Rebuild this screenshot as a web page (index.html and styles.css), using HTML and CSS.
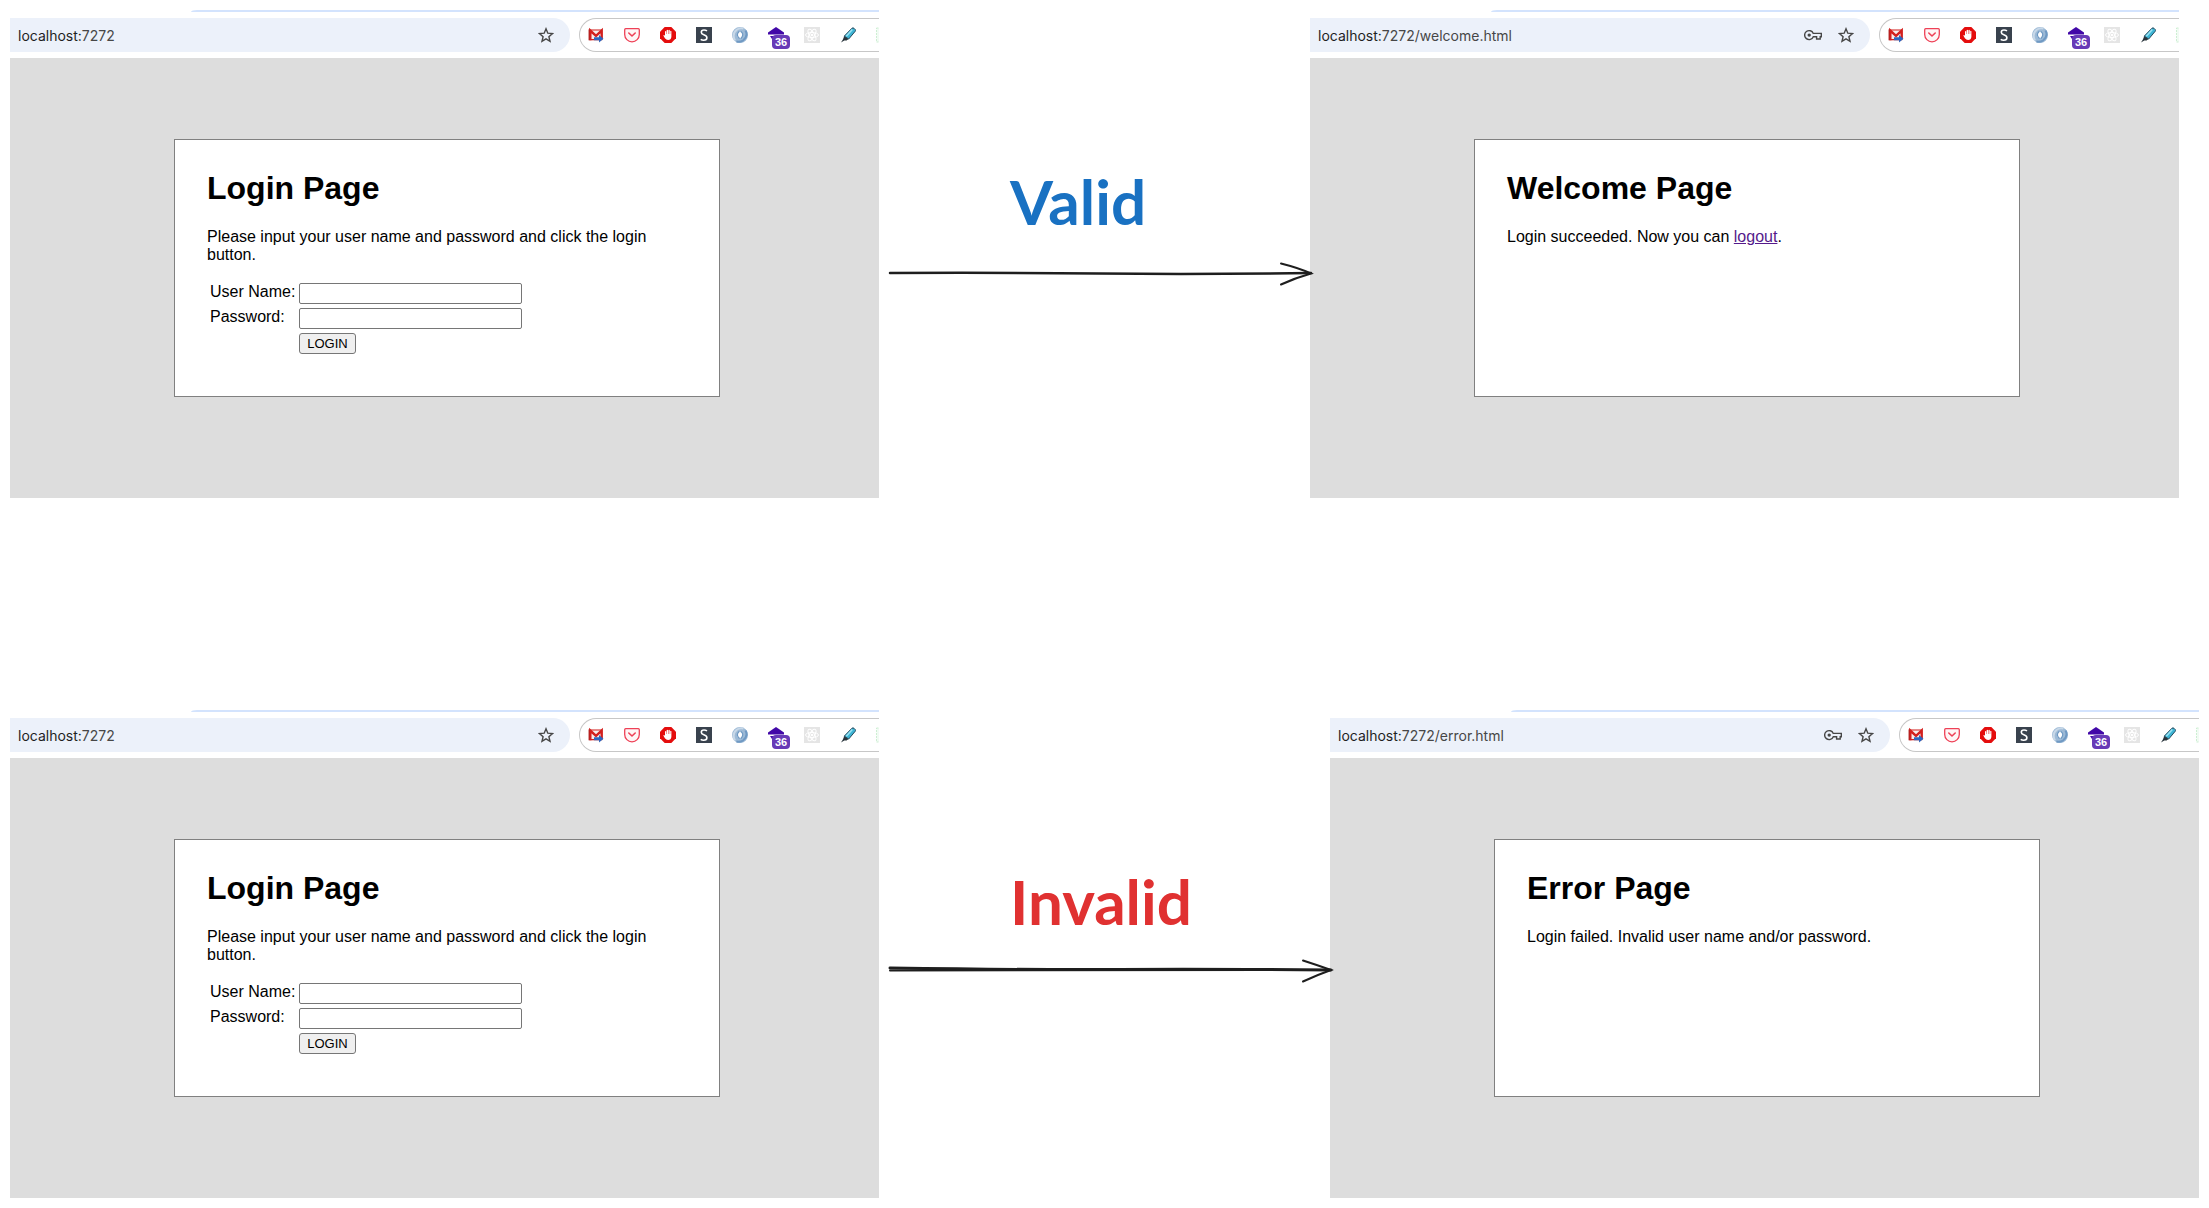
FILE: index.html
```html
<!DOCTYPE html>
<html lang="en">
<head>
<meta charset="utf-8">
<title>Login flow</title>
<link rel="stylesheet" href="styles.css">
</head>
<body>
<svg class="sprite" aria-hidden="true">
  <symbol id="star" viewBox="0 0 16 16"><path d="M8 1.800l1.800 4.400 4.700.4-3.600 3.100 1.100 4.600L8 11.800l-4 2.500 1.100-4.600L1.500 6.600l4.700-.4z" fill="none" stroke="#474747" stroke-width="1.400"/></symbol>
  <symbol id="key" viewBox="0 0 18 16"><path d="M9.300 6.400a4.500 4.500 0 1 0 0 3.400h3.300v2.200h3.600V9.800h1.100V6.400z" fill="none" stroke="#474747" stroke-width="1.400"/><circle cx="5.200" cy="8.100" r="1.700" fill="#474747"/></symbol>
  <symbol id="mail" viewBox="0 0 16 16"><path d="M1 2.500h14v11H1z" fill="#f6eded"/><path d="M2 3h12M2 12.700h12" stroke="#d3201f" stroke-width="1.200"/><path d="M2.300 13.300V3.500L8 8.800l5.700-5.300v9" fill="none" stroke="#d3201f" stroke-width="2.400"/><path d="M1.100 2.400v10.900" stroke="#a81212"/><path d="M6 10.300h5V8l4.500 3.800L11 15.500v-2.200H6z" fill="#2f66bd"/></symbol>
  <symbol id="pocket" viewBox="0 0 16 16"><path d="M1.700 1.700h12.600q1 0 1 1v4.800a7.300 7.300 0 0 1-14.600 0V2.700q0-1 1-1z" fill="#fff5f6" stroke="#ee4056" stroke-width="1.300"/><path d="M4.800 6L8 9l3.200-3" fill="none" stroke="#ee4056" stroke-width="1.600" stroke-linecap="round" stroke-linejoin="round"/></symbol>
  <symbol id="hand" viewBox="0 0 16 16"><path d="M4.700 0h6.600L16 4.700v6.600L11.300 16H4.700L0 11.300V4.700z" fill="#e40d0d"/><path d="M5 8V4.400q.6-.8 1.200 0V7h.4V3.200q.7-.8 1.400 0V7h.4V3.200q.7-.8 1.400 0V7h.4V4.200q.6-.7 1.200 0v5.500q-.3 3.300-3.300 3.300-2 0-3.200-1.800L3.300 8.500q.7-1.200 1.700.2z" fill="#fff"/></symbol>
  <symbol id="letter" viewBox="0 0 16 16"><path d="M0 0h16v16H0z" fill="#39424e"/><path d="M11 3.900Q9.700 3 8 3 5.300 3 5.300 5.200q0 1.600 2.500 2.500 3.100 1.100 3.100 3 0 2.500-3.200 2.500-1.800 0-3-.9" fill="none" stroke="#fff" stroke-width="1.600"/></symbol>
  <symbol id="ring" viewBox="0 0 16 16"><circle cx="8" cy="8" r="5.500" fill="#fff" stroke="#9dbad6" stroke-width="5"/><path d="M3 13.500Q-.5 7 5 2.500 8 .5 11.500 1.500" fill="none" stroke="#c8d8e8" stroke-width="2"/><path d="M13.500 3.500Q16.500 9 11 13.500 8 15.500 4.500 14.500" fill="none" stroke="#6f99c3" stroke-width="2"/><path d="M7 4.500Q3.500 8 7.500 11.500M9 4.500q3.500 3 0 7" fill="none" stroke="#6f99c3" stroke-width="1.200"/></symbol>
  <symbol id="house" viewBox="0 0 16 16"><path d="M8 0l8 5.500v2H0v-2z" fill="#4208a8"/><path d="M2 9h12v3H4z" fill="#4208a8"/></symbol>
  <symbol id="atom" viewBox="0 0 16 16"><path d="M0 0h16v16H0z" fill="#e5e5e5"/><g fill="none" stroke="#fff"><ellipse cx="8" cy="8" rx="6.500" ry="2.500"/><ellipse cx="8" cy="8" rx="6.500" ry="2.500" transform="rotate(60 8 8)"/><ellipse cx="8" cy="8" rx="6.500" ry="2.500" transform="rotate(120 8 8)"/></g><circle cx="8" cy="8" r="1.300" fill="#fff"/></symbol>
  <symbol id="marker" viewBox="0 0 16 16"><path d="M12 1.200q1-.7 2 .1l1.200 1.200q.6.900 0 1.800L8.700 12 4.200 9.200z" fill="#3db4d4" stroke="#24485c"/><path d="M12.300 2.500l-6 6.800" stroke="#9be4f4" stroke-width="1.500"/><path d="M4.200 9.200L8.600 12l-2 1.600-2.300-.2L1 15.500l1.900-3z" fill="#28343b"/></symbol>
  <symbol id="sheet" viewBox="0 0 16 16"><path d="M.5 1h15v14H.5z" fill="#f1fbf3" stroke="#cdeed3" stroke-dasharray="2 1"/></symbol>
</svg>

<main class="board">
  <section class="flow flow-valid">
    <article class="browser">
      <div class="tabline"></div>
      <header class="toolbar">
        <div class="address"><span class="url"><b>localhost:</b>7272</span><svg class="icon"><use href="#star"/></svg></div>
        <div class="extensions">
          <svg class="icon"><use href="#mail"/></svg><svg class="icon"><use href="#pocket"/></svg><svg class="icon"><use href="#hand"/></svg><svg class="icon"><use href="#letter"/></svg><svg class="icon"><use href="#ring"/></svg><span class="counter"><svg class="icon"><use href="#house"/></svg><span class="badge">36</span></span><svg class="icon"><use href="#atom"/></svg><svg class="icon"><use href="#marker"/></svg><svg class="icon"><use href="#sheet"/></svg>
        </div>
      </header>
      <div class="viewport">
        <div class="card">
          <h1>Login Page</h1>
          <p>Please input your user name and password and click the login button.</p>
          <form>
            <label for="user-1">User Name:</label><input id="user-1" type="text">
            <label for="pass-1">Password:</label><input id="pass-1" type="password">
            <button type="button">LOGIN</button>
          </form>
        </div>
      </div>
    </article>
    <div class="connector valid">
      <span class="caption">Valid</span>
      <svg class="arrow" viewBox="0 0 431 24"><path d="M11 12Q120 11.500 220 12.500T432 12" stroke-width="2.500"/><path d="M402 2.500Q420 7 432 12.500 416 17 402 23.500" stroke-width="2"/></svg>
    </div>
    <article class="browser">
      <div class="tabline"></div>
      <header class="toolbar">
        <div class="address"><span class="url"><b>localhost:</b>7272/welcome.html</span><svg class="icon key"><use href="#key"/></svg><svg class="icon"><use href="#star"/></svg></div>
        <div class="extensions">
          <svg class="icon"><use href="#mail"/></svg><svg class="icon"><use href="#pocket"/></svg><svg class="icon"><use href="#hand"/></svg><svg class="icon"><use href="#letter"/></svg><svg class="icon"><use href="#ring"/></svg><span class="counter"><svg class="icon"><use href="#house"/></svg><span class="badge">36</span></span><svg class="icon"><use href="#atom"/></svg><svg class="icon"><use href="#marker"/></svg><svg class="icon"><use href="#sheet"/></svg>
        </div>
      </header>
      <div class="viewport">
        <div class="card">
          <h1>Welcome Page</h1>
          <p>Login succeeded. Now you can <a href="#logout">logout</a>.</p>
        </div>
      </div>
    </article>
  </section>

  <section class="flow flow-invalid">
    <article class="browser">
      <div class="tabline"></div>
      <header class="toolbar">
        <div class="address"><span class="url"><b>localhost:</b>7272</span><svg class="icon"><use href="#star"/></svg></div>
        <div class="extensions">
          <svg class="icon"><use href="#mail"/></svg><svg class="icon"><use href="#pocket"/></svg><svg class="icon"><use href="#hand"/></svg><svg class="icon"><use href="#letter"/></svg><svg class="icon"><use href="#ring"/></svg><span class="counter"><svg class="icon"><use href="#house"/></svg><span class="badge">36</span></span><svg class="icon"><use href="#atom"/></svg><svg class="icon"><use href="#marker"/></svg><svg class="icon"><use href="#sheet"/></svg>
        </div>
      </header>
      <div class="viewport">
        <div class="card">
          <h1>Login Page</h1>
          <p>Please input your user name and password and click the login button.</p>
          <form>
            <label for="user-2">User Name:</label><input id="user-2" type="text">
            <label for="pass-2">Password:</label><input id="pass-2" type="password">
            <button type="button">LOGIN</button>
          </form>
        </div>
      </div>
    </article>
    <div class="connector invalid">
      <span class="caption">Invalid</span>
      <svg class="arrow" viewBox="0 0 451 24"><path d="M11 11Q150 13 240 12.500T452 13" stroke-width="3"/><path d="M11 13.500Q200 12.500 452 13" stroke-width="2"/><path d="M424 3.500Q438 8 452 13 438 18 424 24.500" stroke-width="2"/></svg>
    </div>
    <article class="browser">
      <div class="tabline"></div>
      <header class="toolbar">
        <div class="address"><span class="url"><b>localhost:</b>7272/error.html</span><svg class="icon key"><use href="#key"/></svg><svg class="icon"><use href="#star"/></svg></div>
        <div class="extensions">
          <svg class="icon"><use href="#mail"/></svg><svg class="icon"><use href="#pocket"/></svg><svg class="icon"><use href="#hand"/></svg><svg class="icon"><use href="#letter"/></svg><svg class="icon"><use href="#ring"/></svg><span class="counter"><svg class="icon"><use href="#house"/></svg><span class="badge">36</span></span><svg class="icon"><use href="#atom"/></svg><svg class="icon"><use href="#marker"/></svg><svg class="icon"><use href="#sheet"/></svg>
        </div>
      </header>
      <div class="viewport">
        <div class="card">
          <h1>Error Page</h1>
          <p>Login failed. Invalid user name and/or password.</p>
        </div>
      </div>
    </article>
  </section>
</main>
</body>
</html>
```
FILE: styles.css
```css
* { box-sizing: border-box; }

body {
  margin: 0;
  background: #fff;
  color: #000;
  font-family: "Liberation Sans", Arial, sans-serif;
  font-size: 16px;
  line-height: 18px;
}

.sprite { display: none; }

.board {
  display: flex;
  flex-direction: column;
  gap: 212px;
  padding: 10px;
}

.flow { display: grid; }
.flow-valid { grid-template-columns: minmax(0, 869fr) minmax(0, 431fr) minmax(0, 869fr) minmax(0, 20fr); }
.flow-invalid { grid-template-columns: minmax(0, 869fr) minmax(0, 451fr) minmax(0, 869fr); }

/* Browser window */
.browser { overflow: hidden; }

.tabline {
  height: 2px;
  margin-left: 181px;
  background: #d3e3fd;
  border-top-left-radius: 6px 2px;
}

.toolbar {
  display: flex;
  gap: 9px;
  padding: 6px 0;
}

.address {
  flex: 1;
  display: flex;
  align-items: center;
  gap: 16px;
  height: 34px;
  padding: 0 16px 0 8px;
  border-radius: 0 17px 17px 0;
  background: #ecf1fa;
}

.url {
  flex: 1;
  padding-top: 2px;
  color: #474747;
  font-family: Inter, sans-serif;
  font-size: 14px;
}
.url b { color: #1f1f1f; font-weight: 400; }

.extensions {
  display: flex;
  align-items: center;
  gap: 20px;
  width: 300px;
  height: 34px;
  padding-left: 8px;
  border: 1px solid #c7c7c7;
  border-right: 0;
  border-radius: 17px 0 0 17px;
  overflow: hidden;
}

.icon {
  flex: none;
  display: block;
  width: 16px;
  height: 16px;
}
.icon.key { width: 18px; }

.counter { position: relative; flex: none; }
.badge {
  position: absolute;
  left: 4px;
  top: 8px;
  width: 18px;
  height: 14px;
  border-radius: 4px;
  background: #673ab7;
  color: #fff;
  font-size: 11px;
  font-weight: 700;
  line-height: 14px;
  text-align: center;
}

/* Page shown in the window */
.viewport {
  min-height: 440px;
  padding: 81px 0 0 5px;
  background: #ddd;
}

.card {
  width: 546px;
  max-width: 100%;
  min-height: 258px;
  margin: 0 auto;
  padding: 30px 32px;
  border: 1px solid #808080;
  background: #fff;
}

h1 {
  margin: 0 0 21px;
  font-size: 32px;
  line-height: 37px;
}

p { margin: 0 0 19px; }

a { color: #551a8b; }

form {
  display: grid;
  grid-template-columns: 85px 223px;
  gap: 4px;
  padding-left: 3px;
}

label { white-space: nowrap; }

input {
  height: 21px;
  border: 1px solid #767676;
  border-radius: 2px;
  background: #fff;
}

button {
  grid-column: 2;
  justify-self: start;
  width: 57px;
  height: 21px;
  padding: 0;
  border: 1px solid #767676;
  border-radius: 3px;
  background: #efefef;
  color: #000;
  font-family: inherit;
  font-size: 13px;
}

/* Labelled arrow between windows */
.connector {
  position: relative;
  z-index: 1;
  display: flex;
  flex-direction: column;
  padding-top: 158px;
}

.caption {
  padding-left: 131px;
  font-family: Virgil, Excalifont, "Comic Sans MS", Lato, sans-serif;
  font-size: 62px;
  font-weight: 700;
  line-height: 66px;
}
.valid .caption { color: #1971c2; }
.invalid .caption { color: #e03131; }

.arrow {
  display: block;
  width: 100%;
  margin-top: 27px;
  overflow: visible;
  fill: none;
  stroke: #1e1e1e;
  stroke-linecap: round;
}
.invalid .arrow { margin-top: 23px; }
```
